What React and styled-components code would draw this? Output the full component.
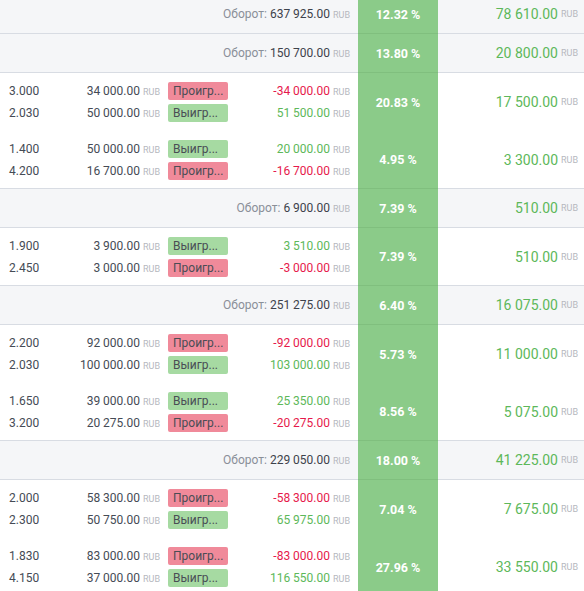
import React from "react";
import styled, { createGlobalStyle } from "styled-components";

const GlobalStyle = createGlobalStyle`
  body {
    margin: 0;
    background: #fff;
    font-family: Roboto, "Noto Sans", sans-serif;
    overflow: hidden;
  }
`;

const Table = styled.div`
  width: 584px;
  margin-top: -5px;
`;

const Row = styled.div`
  display: grid;
  grid-template-columns: 358px 80px 1fr;
  box-sizing: border-box;
  height: ${(p) => (p.$summary ? "39px" : "58px")};
  background: ${(p) => (p.$summary ? "#f5f6f8" : "#fff")};
  border-bottom: ${(p) => (p.$border ? "1px solid #d8dce3" : "none")};
`;

const Left = styled.div`
  display: flex;
  flex-direction: column;
  justify-content: center;
  padding: 0 8px 0 9px;
`;

const Turnover = styled.div`
  text-align: right;
  font-size: 12px;
  color: #8a8f98;

  b {
    font-weight: 400;
    color: #3d424b;
  }
`;

const Line = styled.div`
  display: grid;
  grid-template-columns: 60px 91px 8px 60px 1fr;
  align-items: center;
  height: 22px;
  font-size: 12px;
  color: #454b55;
`;

const Amount = styled.span`
  text-align: right;
  white-space: nowrap;
  color: ${(p) => p.$color || "inherit"};
`;

const Rub = styled.span`
  font-size: 9px;
  color: #b5b8be;
  margin-left: 3px;
`;

const Badge = styled.span`
  grid-column: 4;
  height: 18px;
  line-height: 18px;
  border-radius: 2px;
  padding-left: 5px;
  color: #4a4d55;
  background: ${(p) => (p.$win ? "#a6daa2" : "#f08a9a")};
`;

const Percent = styled.div`
  display: flex;
  align-items: center;
  justify-content: center;
  background: #8bcb89;
  color: #fff;
  font-weight: 700;
  font-size: 12.5px;
  margin-bottom: ${(p) => (p.$border ? "-1px" : "0")};
  border-bottom: ${(p) => (p.$border ? "1px solid #80bf7e" : "none")};
`;

const Profit = styled.div`
  display: flex;
  align-items: center;
  justify-content: flex-end;
  padding-right: 6px;
  font-size: 14px;
  color: #5db85a;
`;

const RED = "#e6194b";
const GREEN = "#5db85a";

const Money = ({ value, color }) => (
  <Amount $color={color}>
    {value}
    <Rub>RUB</Rub>
  </Amount>
);

const rows = [
  { type: "sum", turnover: "637 925.00", pct: "12.32 %", profit: "78 610.00" },
  { type: "sum", turnover: "150 700.00", pct: "13.80 %", profit: "20 800.00" },
  {
    type: "bet",
    pct: "20.83 %",
    profit: "17 500.00",
    lines: [
      ["3.000", "34 000.00", false, "-34 000.00"],
      ["2.030", "50 000.00", true, "51 500.00"],
    ],
  },
  {
    type: "bet",
    pct: "4.95 %",
    profit: "3 300.00",
    lines: [
      ["1.400", "50 000.00", true, "20 000.00"],
      ["4.200", "16 700.00", false, "-16 700.00"],
    ],
  },
  { type: "sum", turnover: "6 900.00", pct: "7.39 %", profit: "510.00" },
  {
    type: "bet",
    pct: "7.39 %",
    profit: "510.00",
    lines: [
      ["1.900", "3 900.00", true, "3 510.00"],
      ["2.450", "3 000.00", false, "-3 000.00"],
    ],
  },
  { type: "sum", turnover: "251 275.00", pct: "6.40 %", profit: "16 075.00" },
  {
    type: "bet",
    pct: "5.73 %",
    profit: "11 000.00",
    lines: [
      ["2.200", "92 000.00", false, "-92 000.00"],
      ["2.030", "100 000.00", true, "103 000.00"],
    ],
  },
  {
    type: "bet",
    pct: "8.56 %",
    profit: "5 075.00",
    lines: [
      ["1.650", "39 000.00", true, "25 350.00"],
      ["3.200", "20 275.00", false, "-20 275.00"],
    ],
  },
  { type: "sum", turnover: "229 050.00", pct: "18.00 %", profit: "41 225.00" },
  {
    type: "bet",
    pct: "7.04 %",
    profit: "7 675.00",
    lines: [
      ["2.000", "58 300.00", false, "-58 300.00"],
      ["2.300", "50 750.00", true, "65 975.00"],
    ],
  },
  {
    type: "bet",
    pct: "27.96 %",
    profit: "33 550.00",
    lines: [
      ["1.830", "83 000.00", false, "-83 000.00"],
      ["4.150", "37 000.00", true, "116 550.00"],
    ],
  },
];

const App = () => {
  return (
    <>
      <GlobalStyle />
      <Table>
        {rows.map((row, i) => {
          const next = rows[i + 1];
          const border = row.type === "sum" || (next && next.type === "sum");
          return (
            <Row key={i} $summary={row.type === "sum"} $border={border}>
              <Left>
                {row.type === "sum" ? (
                  <Turnover>
                    Оборот: <b>{row.turnover}</b>
                    <Rub>RUB</Rub>
                  </Turnover>
                ) : (
                  row.lines.map(([odds, stake, win, payout], j) => (
                    <Line key={j}>
                      <span>{odds}</span>
                      <Money value={stake} />
                      <Badge $win={win}>{win ? "Выигр..." : "Проигр..."}</Badge>
                      <Money value={payout} color={win ? GREEN : RED} />
                    </Line>
                  ))
                )}
              </Left>
              <Percent $border={border}>{row.pct}</Percent>
              <Profit>
                {row.profit}
                <Rub>RUB</Rub>
              </Profit>
            </Row>
          );
        })}
      </Table>
    </>
  );
};

export default App;
